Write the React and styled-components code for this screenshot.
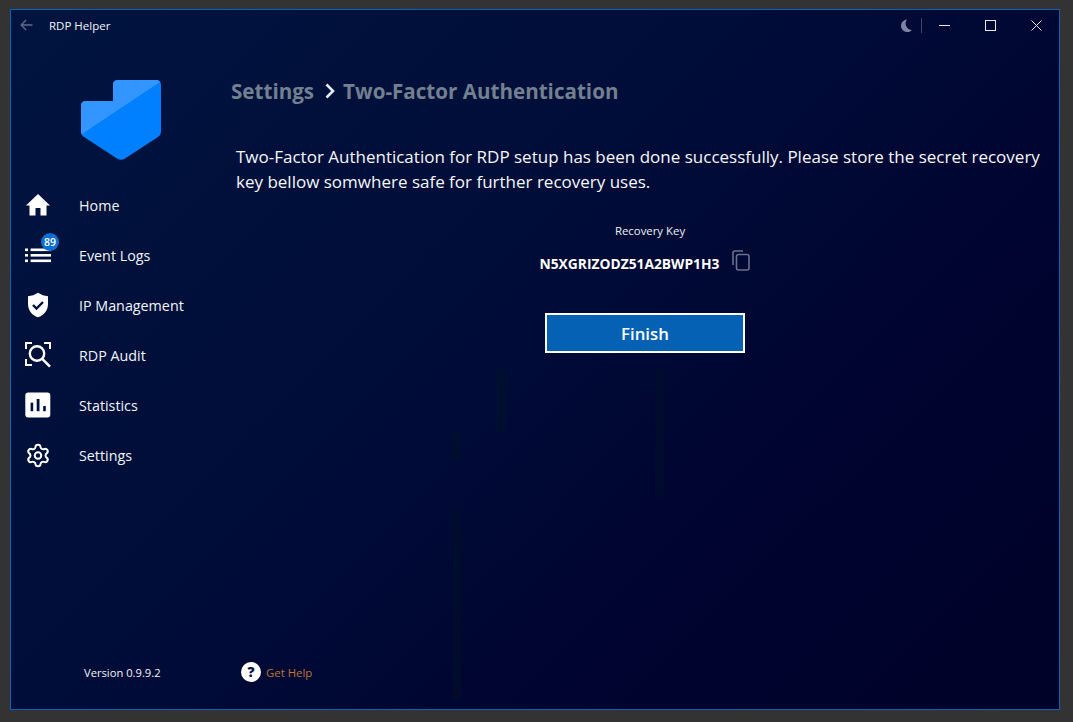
import React from "react";
import styled, { createGlobalStyle } from "styled-components";
import { Settings as Gear } from "lucide-react";

const Global = createGlobalStyle`
  html, body { margin: 0; padding: 0; height: 100%; background: #333333; }
  #root { height: 100%; }
  * { box-sizing: border-box; }
`;

const Page = styled.div`
  width: 1073px;
  height: 722px;
  padding: 9px 13px 12px 10px;
  background: #333333;
  font-family: "Open Sans", "Noto Sans", sans-serif;
  overflow: hidden;
`;

const streak = "linear-gradient(rgba(0, 22, 30, 0.28), rgba(0, 22, 30, 0.28))";

const Window = styled.div`
  width: 100%;
  height: 100%;
  display: flex;
  flex-direction: column;
  border: 1px solid #0b63b5;
  background-color: #000a34;
  background-image:
    ${streak}, ${streak}, ${streak}, ${streak},
    linear-gradient(135deg, #00143f 0%, #000d38 42%, #000430 70%, #000228 100%);
  background-repeat: no-repeat;
  background-size: 9px 27px, 9px 190px, 9px 63px, 9px 127px, 100% 100%;
  background-position: 441px 423px, 441px 500px, 486px 360px, 644px 360px, 0 0;
  color: #fff;
`;

const TitleBar = styled.header`
  flex: none;
  height: 30px;
  display: flex;
  align-items: center;
  padding-left: 9px;
`;

const AppName = styled.span`
  margin-left: 16px;
  font-size: 11.5px;
  color: #f2f4f8;
`;

const Controls = styled.div`
  margin-left: auto;
  display: flex;
  align-items: center;
`;

const Divider = styled.span`
  width: 1px;
  height: 15px;
  margin: 0 -1px 0 9px;
  background: #3a4568;
`;

const CtrlBtn = styled.button`
  width: 46px;
  height: 30px;
  padding: 0;
  display: flex;
  align-items: center;
  justify-content: center;
  border: 0;
  background: transparent;
`;

const Body = styled.div`
  flex: 1;
  display: flex;
  min-height: 0;
`;

const Sidebar = styled.aside`
  flex: none;
  width: 220px;
  display: flex;
  flex-direction: column;
`;

const LogoWrap = styled.div`
  height: 120px;
  padding: 40px 0 0 70px;
`;

const Nav = styled.nav`
  margin-top: 20px;
  display: flex;
  flex-direction: column;
`;

const NavRow = styled.a`
  height: 50px;
  display: flex;
  align-items: center;
  font-size: 14.3px;
  color: #f2f4f8;
`;

const IconSlot = styled.span`
  position: relative;
  flex: none;
  width: 26px;
  height: 26px;
  margin: 0 28px 0 14px;
  display: flex;
  align-items: center;
  justify-content: center;
`;

const Badge = styled.span`
  position: absolute;
  top: -9px;
  left: 16px;
  width: 18px;
  height: 18px;
  border-radius: 50%;
  background: #0a6fd0;
  color: #fff;
  font-size: 10.5px;
  font-weight: 600;
  line-height: 18px;
  text-align: center;
`;

const Version = styled.div`
  margin-top: auto;
  margin-bottom: 26px;
  padding-left: 73px;
  font-size: 11.2px;
  line-height: 20px;
  color: #f2f4f8;
`;

const Main = styled.main`
  flex: 1;
  min-width: 0;
  display: flex;
  flex-direction: column;
`;

const Crumbs = styled.h1`
  margin: 0;
  height: 60px;
  padding-top: 42px;
  display: flex;
  align-items: center;
  font-size: 20.6px;
  font-weight: 700;
  color: #72808f;
  line-height: 30px;
  white-space: nowrap;
`;

const Chevron = styled.svg`
  margin: 0 8px 0 11px;
`;

const Message = styled.p`
  margin: 44px 0 0 5px;
  width: 815px;
  font-size: 17px;
  line-height: 25px;
  color: #f6f7fa;
`;

const KeyBlock = styled.section`
  margin-top: 27px;
  display: flex;
  flex-direction: column;
  align-items: center;
`;

const KeyLabel = styled.div`
  padding-left: 10px;
  font-size: 11.4px;
  line-height: 20px;
  color: #eef0f5;
`;

const KeyRow = styled.div`
  margin-top: 10px;
  height: 24px;
  display: flex;
  align-items: center;
  gap: 13px;
`;

const KeyValue = styled.span`
  font-size: 13.8px;
  font-weight: 700;
  color: #fff;
`;

const CopyIcon = styled.svg`
  margin-top: -6px;
`;

const FinishBtn = styled.button`
  margin-top: 38px;
  width: 200px;
  height: 40px;
  padding: 1px 0 0;
  border: 2px solid #fff;
  background: #0561b4;
  color: #fff;
  font-family: inherit;
  font-size: 16.8px;
  font-weight: 600;
`;

const Help = styled.div`
  margin-top: auto;
  margin-bottom: 27px;
  padding-left: 10px;
  height: 20px;
  display: flex;
  align-items: center;
  gap: 5px;
  font-size: 11.4px;
  color: #bd772f;
`;

const Logo = () => (
  <svg width="80" height="80" viewBox="0 0 80 80">
    <path
      d="M37 0 H75 Q80 0 80 5 V52 Q80 55 77 57 L44 78.5 Q40 81 36 78.5 L3 57 Q0 55 0 52 V26 Q0 21 5 21 H32 V5 Q32 0 37 0 Z"
      fill="#007fff"
    />
    <path
      d="M37 0 H75 Q78 0 79 2 L1 54 Q0 54 0 52 V26 Q0 21 5 21 H32 V5 Q32 0 37 0 Z"
      fill="#3395ff"
    />
  </svg>
);

const items = [
  {
    label: "Home",
    icon: (
      <svg width="26" height="26" viewBox="0 0 26 26" fill="#fff">
        <path d="M13 2 L25 13.4 H21.5 V23.5 H15.5 V16 H10.5 V23.5 H4.5 V13.4 H1 Z" />
      </svg>
    ),
  },
  {
    label: "Event Logs",
    badge: "89",
    icon: (
      <svg width="26" height="26" viewBox="0 0 26 26" fill="#fff">
        <rect x="0" y="6.5" width="3" height="2.6" />
        <rect x="0" y="12" width="3" height="2.6" />
        <rect x="0" y="17.5" width="3" height="2.6" />
        <rect x="5.6" y="6.5" width="20.4" height="2.6" />
        <rect x="5.6" y="12" width="20.4" height="2.6" />
        <rect x="5.6" y="17.5" width="20.4" height="2.6" />
      </svg>
    ),
  },
  {
    label: "IP Management",
    icon: (
      <svg width="26" height="26" viewBox="0 0 26 26">
        <path d="M13 0.7 C16 2.7 19.5 3.9 23 4.2 V12 C23 18.5 19 23.3 13 25.3 C7 23.3 3 18.5 3 12 V4.2 C6.5 3.9 10 2.7 13 0.7 Z" fill="#fff" />
        <path d="M8 13 L11.5 16.5 L18 10" fill="none" stroke="#001040" strokeWidth="2.4" />
      </svg>
    ),
  },
  {
    label: "RDP Audit",
    icon: (
      <svg width="26" height="26" viewBox="0 0 26 26" fill="none" stroke="#fff" strokeWidth="2">
        <path d="M1 7 V1 H7 M19 1 H25 V7 M1 17 V23 H7" />
        <circle cx="12" cy="11.5" r="7.2" strokeWidth="2.4" />
        <path d="M17.2 16.8 L25 24.6" strokeWidth="2.6" />
      </svg>
    ),
  },
  {
    label: "Statistics",
    icon: (
      <svg width="26" height="26" viewBox="0 0 26 26">
        <rect x="0.3" y="0.5" width="25" height="25" rx="3" fill="#fff" />
        <rect x="5.6" y="10.7" width="2.6" height="8.5" fill="#001040" />
        <rect x="11.7" y="7" width="2.8" height="12.2" fill="#001040" />
        <rect x="18.2" y="14" width="2.6" height="5.2" fill="#001040" />
      </svg>
    ),
  },
  {
    label: "Settings",
    icon: <Gear size={29} strokeWidth={1.85} color="#fff" />,
  },
];

export default function App() {
  return (
    <Page>
      <Global />
      <Window>
        <TitleBar>
          <svg width="13" height="12" viewBox="0 0 13 12" fill="none" stroke="#5f6b88" strokeWidth="1.3">
            <path d="M12.5 6 H1.2 M6 1 L1.2 6 L6 11" />
          </svg>
          <AppName>RDP Helper</AppName>
          <Controls>
            <svg width="12" height="13" viewBox="0 0 12 13">
              <path d="M7 0.5 A6.3 6.3 0 1 0 12 11 A6.5 6.5 0 0 1 7 0.5 Z" fill="#7b86a3" />
            </svg>
            <Divider />
            <CtrlBtn aria-label="Minimize">
              <svg width="11" height="11" viewBox="0 0 11 11">
                <path d="M0 5.5 H11" stroke="#e8eaf0" />
              </svg>
            </CtrlBtn>
            <CtrlBtn aria-label="Maximize">
              <svg width="11" height="11" viewBox="0 0 11 11">
                <rect x="0.5" y="0.5" width="10" height="10" fill="none" stroke="#e8eaf0" />
              </svg>
            </CtrlBtn>
            <CtrlBtn aria-label="Close">
              <svg width="11" height="11" viewBox="0 0 11 11">
                <path d="M0.5 0.5 L10.5 10.5 M10.5 0.5 L0.5 10.5" stroke="#e8eaf0" />
              </svg>
            </CtrlBtn>
          </Controls>
        </TitleBar>
        <Body>
          <Sidebar>
            <LogoWrap>
              <Logo />
            </LogoWrap>
            <Nav>
              {items.map((it) => (
                <NavRow key={it.label}>
                  <IconSlot>
                    {it.icon}
                    {it.badge && <Badge>{it.badge}</Badge>}
                  </IconSlot>
                  {it.label}
                </NavRow>
              ))}
            </Nav>
            <Version>Version 0.9.9.2</Version>
          </Sidebar>
          <Main>
            <Crumbs>
              Settings
              <Chevron width="10" height="16" viewBox="0 0 10 16" fill="none" stroke="#e6e9ef" strokeWidth="2.6">
                <path d="M1.5 1.5 L8 8 L1.5 14.5" />
              </Chevron>
              Two-Factor Authentication
            </Crumbs>
            <Message>
              Two-Factor Authentication for RDP setup has been done successfully. Please store the secret recovery key
              bellow somwhere safe for further recovery uses.
            </Message>
            <KeyBlock>
              <KeyLabel>Recovery Key</KeyLabel>
              <KeyRow>
                <KeyValue>N5XGRIZODZ51A2BWP1H3</KeyValue>
                <CopyIcon width="18" height="21" viewBox="0 0 18 21" fill="none" stroke="#66738a" strokeWidth="1.6">
                  <path d="M1 15 V3 Q1 1 3 1 H11" />
                  <rect x="4.5" y="4.5" width="12.5" height="15.5" rx="2" />
                </CopyIcon>
              </KeyRow>
              <FinishBtn>Finish</FinishBtn>
            </KeyBlock>
            <Help>
              <svg width="20" height="20" viewBox="0 0 20 20">
                <circle cx="10" cy="10" r="10" fill="#fff" />
                <text x="10" y="15" textAnchor="middle" fontSize="14" fontWeight="800" fontFamily="Open Sans" fill="#001040">
                  ?
                </text>
              </svg>
              Get Help
            </Help>
          </Main>
        </Body>
      </Window>
    </Page>
  );
}
